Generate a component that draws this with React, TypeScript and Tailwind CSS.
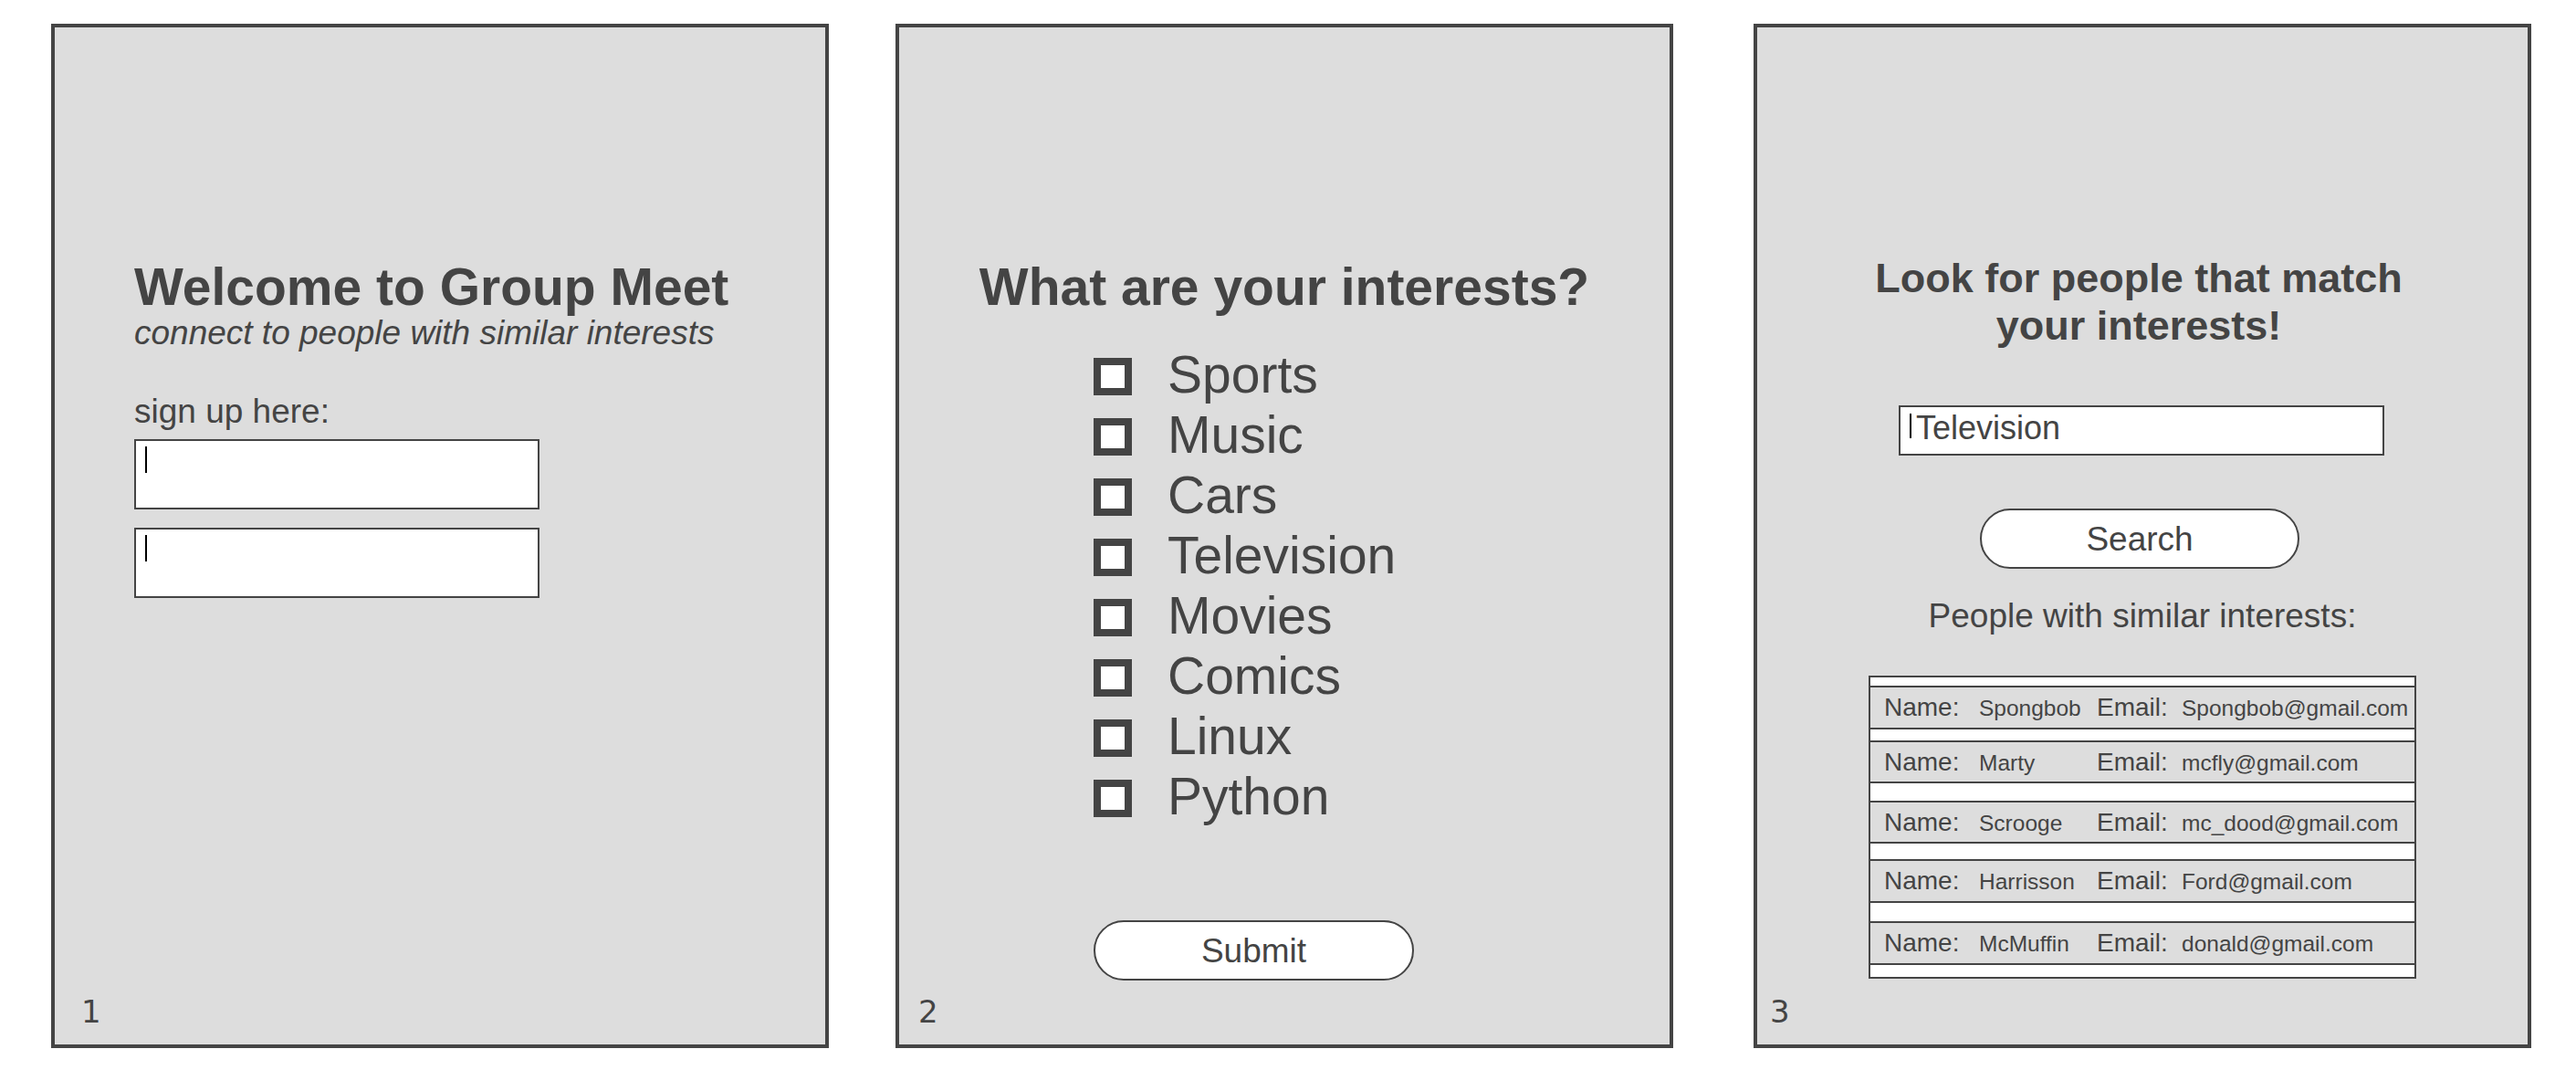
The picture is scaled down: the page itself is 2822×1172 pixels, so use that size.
import React from "react";

const interests = ["Sports", "Music", "Cars", "Television", "Movies", "Comics", "Linux", "Python"];

const people = [
  { name: "Spongbob", email: "Spongbob@gmail.com", gap: "h-[9px]", row: "h-[48px]" },
  { name: "Marty", email: "mcfly@gmail.com", gap: "h-[12px]", row: "h-[47px]" },
  { name: "Scrooge", email: "mc_dood@gmail.com", gap: "h-[19px]", row: "h-[47px]" },
  { name: "Harrisson", email: "Ford@gmail.com", gap: "h-[17px]", row: "h-[48px]" },
  { name: "McMuffin", email: "donald@gmail.com", gap: "h-[20px]", row: "h-[48px]" },
];

function PageNumber({ n, pad }: { n: string; pad: string }) {
  return (
    <div className={`mt-auto pb-[19px] ${pad} font-['DejaVu_Sans',sans-serif] text-[34px] leading-none text-[#444]`}>
      {n}
    </div>
  );
}

export default function App() {
  return (
    <div className="w-[2822px] h-[1172px] bg-white font-['Liberation_Sans',Arial,sans-serif] text-[#444] flex items-start pl-[56px] pt-[26px]">
      {/* Panel 1 */}
      <div className="w-[852px] h-[1122px] shrink-0 border-4 border-[#444] bg-[#dddddd] flex flex-col">
        <div className="pt-[256px] pl-[87px] flex flex-col">
          <h1 className="text-[57px] font-bold leading-none">Welcome to Group Meet</h1>
          <p className="mt-[3px] text-[37px] italic leading-none">connect to people with similar interests</p>
          <p className="mt-[49px] text-[37px] leading-none">sign up here:</p>
          <div className="mt-[12px] w-[444px] h-[77px] border-2 border-[#444] bg-white pl-[10px] pt-[6px]">
            <div className="w-[2px] h-[29px] bg-black" />
          </div>
          <div className="mt-[20px] w-[444px] h-[77px] border-2 border-[#444] bg-white pl-[10px] pt-[6px]">
            <div className="w-[2px] h-[29px] bg-black" />
          </div>
        </div>
        <PageNumber n="1" pad="pl-[29px]" />
      </div>

      {/* Panel 2 */}
      <div className="ml-[73px] w-[852px] h-[1122px] shrink-0 border-4 border-[#444] bg-[#dddddd] flex flex-col">
        <h1 className="pt-[256px] text-center text-[57px] font-bold leading-none">What are your interests?</h1>
        <div className="mt-[34px] pl-[213px] flex flex-col">
          {interests.map((label) => (
            <div key={label} className="h-[66px] flex items-center">
              <div className="mt-[5px] w-[42px] h-[41px] border-[8px] border-[#444] bg-white shrink-0" />
              <span className="ml-[39px] text-[57px] leading-[66px]">{label}</span>
            </div>
          ))}
        </div>
        <div className="mt-[103px] ml-[213px] w-[351px] h-[66px] rounded-full border-2 border-[#444] bg-white flex items-center justify-center text-[37px] leading-none">
          Submit
        </div>
        <PageNumber n="2" pad="pl-[21px]" />
      </div>

      {/* Panel 3 */}
      <div className="ml-[88px] w-[852px] h-[1122px] shrink-0 border-4 border-[#444] bg-[#dddddd] flex flex-col">
        <h1 className="pt-[249px] pr-[8px] text-center text-[45px] font-bold leading-[52px]">
          Look for people that match
          <br />
          your interests!
        </h1>
        <div className="mt-[61px] ml-[155px] w-[532px] h-[55px] border-2 border-[#444] bg-white flex items-start pl-[10px] pt-[5px]">
          <div className="mt-[2px] w-[2px] h-[27px] bg-black shrink-0" />
          <span className="ml-[5px] text-[36px] leading-none">Television</span>
        </div>
        <div className="mt-[58px] ml-[244px] w-[350px] h-[66px] rounded-full border-2 border-[#444] bg-white flex items-center justify-center text-[37px] leading-none">
          Search
        </div>
        <p className="mt-[33px] text-center text-[37px] leading-none">People with similar interests:</p>
        <div className="mt-[47px] ml-[122px] w-[600px] border-2 border-[#444] bg-white flex flex-col">
          {people.map((p) => (
            <React.Fragment key={p.name}>
              <div className={p.gap} />
              <div className={`${p.row} border-y-2 border-[#444] bg-[#dddddd] flex items-baseline pt-[8px] pl-[15px] leading-none`}>
                <span className="w-[104px] text-[28px]">Name:</span>
                <span className="w-[129px] text-[24.5px]">{p.name}</span>
                <span className="w-[93px] text-[28px]">Email:</span>
                <span className="text-[24.5px]">{p.email}</span>
              </div>
            </React.Fragment>
          ))}
          <div className="h-[13px]" />
        </div>
        <PageNumber n="3" pad="pl-[14px]" />
      </div>
    </div>
  );
}
